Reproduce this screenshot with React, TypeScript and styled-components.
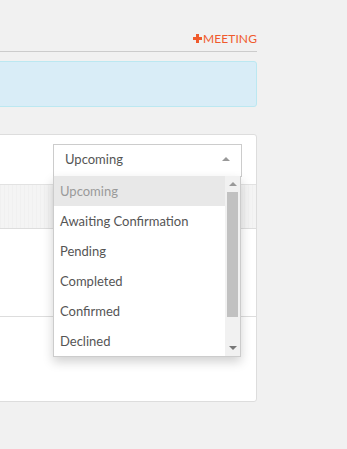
import React from 'react';
import styled, { createGlobalStyle } from 'styled-components';

const GlobalStyle = createGlobalStyle`
  html, body {
    margin: 0;
    padding: 0;
    background: #f1f1f1;
    font-family: Lato, "Open Sans", sans-serif;
    color: #555;
  }
`;

const Page = styled.div`
  width: 277px;
  margin-left: -20px;
  padding-top: 31px;
`;

const Header = styled.div`
  display: flex;
  justify-content: flex-end;
  align-items: center;
  height: 15px;
  border-bottom: 1px solid #cccccc;
  padding-bottom: 5px;
`;

const AddLink = styled.a`
  display: flex;
  align-items: center;
  gap: 1px;
  color: #f05a2c;
  font-size: 12px;
  text-transform: uppercase;
  text-decoration: none;
  letter-spacing: 0.1px;
  cursor: pointer;
`;

const Notice = styled.div`
  margin-top: 9px;
  height: 44px;
  background: #d9edf7;
  border: 1px solid #bce8f1;
  border-radius: 3px;
`;

const Card = styled.div`
  position: relative;
  margin-top: 27px;
  height: 268px;
  box-sizing: border-box;
  background: #fff;
  border: 1px solid #dddddd;
  border-radius: 3px;
  padding-top: 9px;
`;

const Toolbar = styled.div`
  display: flex;
  justify-content: flex-end;
  padding-right: 14px;
`;

const SelectBox = styled.div`
  width: 189px;
  height: 33px;
  box-sizing: border-box;
  border: 1px solid #cccccc;
  display: flex;
  align-items: center;
  justify-content: space-between;
  padding: 0 11px 4px;
  font-size: 13px;
  color: #555;
`;

const Caret = styled.span<{ $down?: boolean }>`
  width: 0;
  height: 0;
  border-left: 4px solid transparent;
  border-right: 4px solid transparent;
  ${(p) =>
    p.$down ? 'border-top: 4px solid #777;' : 'border-bottom: 4px solid #999;'}
`;

const TableHead = styled.div`
  margin-top: 7px;
  height: 43px;
  border-top: 1px solid #e2e2e2;
  border-bottom: 1px solid #dddddd;
  background: repeating-linear-gradient(
    90deg,
    #f4f4f4 0px,
    #f4f4f4 3px,
    #f0f0f0 3px,
    #f0f0f0 4px
  );
`;

const TableRow = styled.div`
  height: 87px;
  border-bottom: 1px solid #dddddd;
`;

const Dropdown = styled.div`
  position: absolute;
  top: 41px;
  right: 15px;
  width: 188px;
  height: 181px;
  box-sizing: border-box;
  background: #fff;
  border: 1px solid #cccccc;
  border-top: none;
  box-shadow: 0 5px 10px rgba(0, 0, 0, 0.18);
  display: flex;
`;

const OptionList = styled.div`
  flex: 1;
  display: flex;
  flex-direction: column;
`;

const Option = styled.div<{ $active?: boolean }>`
  height: 30px;
  display: flex;
  align-items: center;
  padding-left: 6px;
  padding-bottom: 1px;
  box-sizing: border-box;
  font-size: 13px;
  color: ${(p) => (p.$active ? '#9a9a9a' : '#555')};
  background: ${(p) => (p.$active ? '#e8e8e8' : '#fff')};
`;

const ScrollBar = styled.div`
  width: 15px;
  background: #f1f1f1;
  display: flex;
  flex-direction: column;
  align-items: center;
`;

const ScrollButton = styled.div`
  height: 16px;
  width: 15px;
  display: flex;
  align-items: center;
  justify-content: center;
`;

const Thumb = styled.div`
  width: 11px;
  height: 125px;
  background: #c1c1c1;
`;

const Spacer = styled.div`
  flex: 1;
`;

const options = [
  'Upcoming',
  'Awaiting Confirmation',
  'Pending',
  'Completed',
  'Confirmed',
  'Declined',
];

const PlusIcon = () => (
  <svg width="9" height="9" viewBox="0 0 9 9">
    <rect x="3" y="0" width="3" height="9" fill="#f05a2c" />
    <rect x="0" y="3" width="9" height="3" fill="#f05a2c" />
  </svg>
);

const App: React.FC = () => {
  return (
    <>
      <GlobalStyle />
      <Page>
        <Header>
          <AddLink>
            <PlusIcon />
            Meeting
          </AddLink>
        </Header>
        <Notice />
        <Card>
          <Toolbar>
            <SelectBox>
              Upcoming
              <Caret />
            </SelectBox>
          </Toolbar>
          <TableHead />
          <TableRow />
          <Dropdown>
            <OptionList>
              {options.map((o, i) => (
                <Option key={o} $active={i === 0}>
                  {o}
                </Option>
              ))}
            </OptionList>
            <ScrollBar>
              <ScrollButton>
                <Caret />
              </ScrollButton>
              <Thumb />
              <Spacer />
              <ScrollButton>
                <Caret $down />
              </ScrollButton>
            </ScrollBar>
          </Dropdown>
        </Card>
      </Page>
    </>
  );
};

export default App;
